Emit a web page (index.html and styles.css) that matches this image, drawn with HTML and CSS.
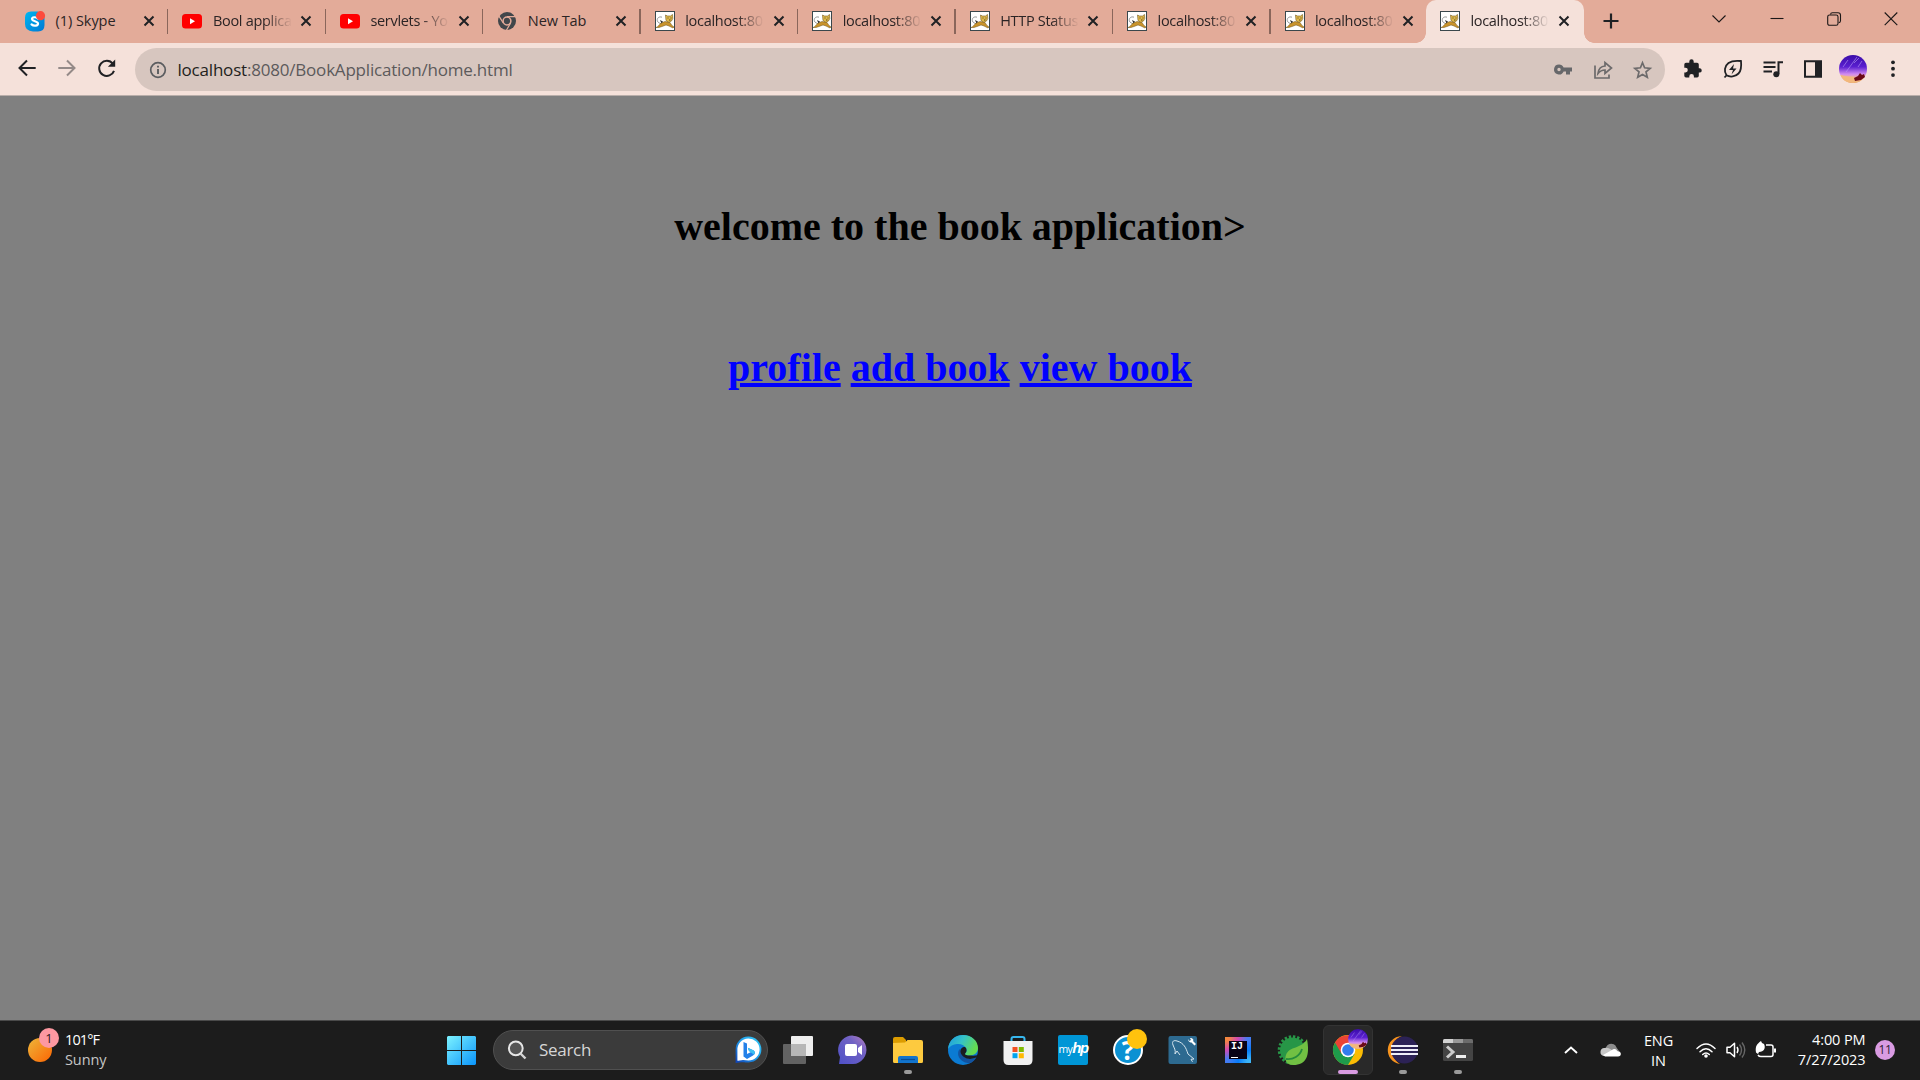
FILE: index.html
```html
<!DOCTYPE html>
<html lang="en">
<head>
<meta charset="utf-8">
<title>localhost:8080/BookApplication/home.html</title>
<link rel="stylesheet" href="styles.css">
</head>
<body>
<svg class="defs" aria-hidden="true">
  <defs>
    <linearGradient id="sky" x1="0" y1="0" x2="1" y2="1"><stop offset="0" stop-color="#00b7f0"/><stop offset="1" stop-color="#0078d4"/></linearGradient>
    <linearGradient id="win" x1="0" y1="0" x2="1" y2="1"><stop offset="0" stop-color="#7df3ff"/><stop offset="1" stop-color="#0a94fb"/></linearGradient>
    <linearGradient id="avatar" x1="0" y1="0" x2="0" y2="1"><stop offset="0" stop-color="#3a0ca8"/><stop offset=".42" stop-color="#5a1fd0"/><stop offset=".68" stop-color="#d08af0"/><stop offset=".82" stop-color="#f0b0a0"/><stop offset="1" stop-color="#d88a50"/></linearGradient>
    <symbol id="x" viewBox="0 0 12 12"><path d="M1.500 1.500l9 9M10.500 1.500l-9 9" fill="none" stroke="#202124" stroke-width="2"/></symbol>
    <symbol id="yt" viewBox="0 0 20 20"><rect y="3" width="20" height="14.500" rx="3.500" fill="#f00"/><path d="M8 7.300v6l5-3z" fill="#fff"/></symbol>
    <symbol id="cat" viewBox="0 0 20 20"><rect x=".5" y=".5" width="19" height="19" fill="#fff" stroke="#3a474c"/><path d="M7 6.200C4 5.200 2 7 2.300 9.500S5 12 6 13" fill="none" stroke="#999" stroke-width="1"/><path d="M1 16.500c2-.5 3-2.500 5-4.500l4-1.500 5 1 2 3 2 1.500-1 1-4-2-3-1-4 1.500-3 1z" fill="#c9932b" stroke="#6e5218" stroke-width=".5"/><path d="M10.500 4l2 1h3l2-1.500.3 4-1.300 2.500-2.500 1.500-3-2z" fill="#dfb84a" stroke="#76581c" stroke-width=".6"/><path d="M12.500 7h1M15.500 7h1M14 9h1.500" stroke="#4b3b1a" stroke-width=".9"/><path d="M5 9l3 1.500-1.500 2z" fill="#333"/></symbol>
    <symbol id="scene" viewBox="0 0 28 28"><circle cx="14" cy="14" r="14" fill="url(#avatar)"/><path d="M4 12l5-7M10 13l8-11M15 8l5-5M19 12l4-6M7 17l3-4" stroke="#b99af5" stroke-width=".6"/><path d="M1.500 20c7 2 11 1 15 2l9-.3A14 14 0 0 1 14 28C8 28 3 25 1.500 20z" fill="#f2b87c"/><path d="M15 23l4-2 2-3 2 2 2-1 1 3-4 3-6 1z" fill="#6a0a18"/></symbol>
  </defs>
</svg>

<header class="tabstrip">
  <div class="tab"><svg class="fav" viewBox="0 0 20 20"><path d="M6 .5h7l6.500 6V14q0 6.500-6.500 6.500H8Q0 20 0 13V6.500Q0 .5 6 .5z" fill="url(#sky)"/><path d="M13 7.500C11 5.500 6.800 6 7 8.200s6 1.800 6 4.200-4 3.200-6.500 1" fill="none" stroke="#fff" stroke-width="2.200" stroke-linecap="round"/><circle cx="15.500" cy="4.700" r="4.600" fill="#fd4a3c"/></svg><span class="title whole">(1) Skype</span><svg class="x"><use href="#x"/></svg></div>
  <div class="tab"><svg class="fav"><use href="#yt"/></svg><span class="title">Bool applica</span><svg class="x"><use href="#x"/></svg></div>
  <div class="tab"><svg class="fav"><use href="#yt"/></svg><span class="title">servlets - Yo</span><svg class="x"><use href="#x"/></svg></div>
  <div class="tab"><svg class="fav" viewBox="0 0 20 20"><circle cx="10" cy="10" r="9" fill="#41464a"/><circle cx="10" cy="10" r="3.900" fill="#41464a" stroke="#e3ab99" stroke-width="1.500"/><path d="M10 5.700h9M6.300 12L1.800 4.800M13.600 12l-4.300 7.500" stroke="#e3ab99" stroke-width="1.300"/></svg><span class="title whole">New Tab</span><svg class="x"><use href="#x"/></svg></div>
  <div class="tab"><svg class="fav"><use href="#cat"/></svg><span class="title">localhost:80</span><svg class="x"><use href="#x"/></svg></div>
  <div class="tab"><svg class="fav"><use href="#cat"/></svg><span class="title">localhost:80</span><svg class="x"><use href="#x"/></svg></div>
  <div class="tab"><svg class="fav"><use href="#cat"/></svg><span class="title">HTTP Status</span><svg class="x"><use href="#x"/></svg></div>
  <div class="tab"><svg class="fav"><use href="#cat"/></svg><span class="title">localhost:80</span><svg class="x"><use href="#x"/></svg></div>
  <div class="tab last"><svg class="fav"><use href="#cat"/></svg><span class="title">localhost:80</span><svg class="x"><use href="#x"/></svg></div>
  <div class="tab active"><svg class="fav"><use href="#cat"/></svg><span class="title">localhost:80</span><svg class="x"><use href="#x"/></svg></div>
  <svg class="plus" viewBox="0 0 16 16"><path d="M8 .5v15M.5 8h15" stroke="#202124" stroke-width="2.200"/></svg>
  <div class="winctl">
    <svg viewBox="0 0 16 16"><path d="M1.500 4.500l6.500 6.500 6.500-6.500" class="thin"/></svg>
    <svg viewBox="0 0 16 16"><path d="M1.500 7.500h13" class="thin"/></svg>
    <svg viewBox="0 0 16 16"><rect x="1.700" y="4" width="10.300" height="10.300" rx="1.800" class="thin"/><path d="M4.500 3.500Q4.700 1.700 6.500 1.700H12q2.500 0 2.500 2.500v5.500q0 1.800-1.800 2" class="thin"/></svg>
    <svg viewBox="0 0 16 16"><path d="M1.700 1.500l12.600 12.600M14.300 1.500L1.700 14.100" class="thin"/></svg>
  </div>
</header>

<nav class="toolbar">
  <div class="navbtns">
    <svg viewBox="0 0 20 20"><path d="M18.700 10H3M10 2.500L2.500 10l7.500 7.500" class="ink"/></svg>
    <svg viewBox="0 0 20 20" class="dim"><path d="M1.300 10H17M10 2.500l7.500 7.500-7.500 7.500" class="ink"/></svg>
    <svg viewBox="0 0 20 20"><path d="M15.800 5.600A7.600 7.600 0 1 0 17 12.800" class="ink"/><path d="M18.200 1.500v7.300h-7.300z" fill="#202124"/></svg>
  </div>
  <div class="omnibox">
    <svg class="info" viewBox="0 0 18 18"><circle cx="9" cy="9" r="7.300" fill="none" stroke="#5b5d60" stroke-width="1.700"/><path d="M9 8v5M9 4.700v1.900" stroke="#5b5d60" stroke-width="1.900"/></svg>
    <span class="url"><b>localhost</b>:8080/BookApplication/home.html</span>
    <svg viewBox="0 0 20 20"><path d="M6 4.500a5 5 0 1 0 4.600 7H13v3h4v-3h2v-4h-8.400A5 5 0 0 0 6 4.500zm0 3.300a1.700 1.700 0 1 1 0 3.400 1.700 1.700 0 0 1 0-3.400z" fill="#66676a"/></svg>
    <svg viewBox="0 0 20 20"><path d="M2 5.500V18h14v-3.500" class="gray"/><path d="M5 13.500c.6-5 3-7.300 7-7.500V2.500L18.500 8 12 13.500V10C9 10 7 11 5 13.500z" class="gray"/></svg>
    <svg viewBox="0 0 20 20"><path d="M9.500 2.700l2.100 5.100 5.600.5-4.200 3.600 1.300 5.400-4.800-2.900-4.800 2.900L6 11.900 1.800 8.300l5.600-.5z" class="gray"/></svg>
  </div>
  <div class="ext">
    <svg viewBox="0 0 20 20"><path d="M17 9.300h-1.200V5.500q0-1.700-1.700-1.700h-3.400V2.500a2.200 2.200 0 0 0-4.400 0v1.300H3Q1.300 3.800 1.300 5.500v3.300h1.200a2.300 2.300 0 0 1 0 4.600H1.300v3.400q0 1.700 1.700 1.700h3.300v-1.200a2.300 2.300 0 0 1 4.600 0v1.200h3.200q1.700 0 1.700-1.700v-3.200H17a2.200 2.200 0 0 0 0-4.300z" fill="#202124"/></svg>
    <svg viewBox="0 0 20 20"><path d="M1.500 18.500l2-2.200C.8 12.500 1.500 7 5.500 4 9 1.500 13.500 1.500 18 2c.5 5 .5 9.500-2.500 12.500-3.200 3.300-8.300 4-12 1.800" class="ink thin2"/><path d="M11 5l-5 6h4l-1.500 4.500 5-6H10z" fill="#202124"/></svg>
    <svg viewBox="0 0 20 20"><path d="M.5 3.500h12M.5 8h12M.5 12.500H9M15.500 15V3.200H20" class="ink"/><circle cx="13.300" cy="15.200" r="3" fill="#202124"/></svg>
    <svg viewBox="0 0 20 20"><path d="M2 2.200h16v15.600H2z" class="ink"/><path d="M12 2h7v16h-7z" fill="#202124"/></svg>
    <svg class="avatar"><use href="#scene"/></svg>
    <svg viewBox="0 0 20 20"><circle cx="10" cy="3.300" r="1.900"/><circle cx="10" cy="9.700" r="1.900"/><circle cx="10" cy="16.100" r="1.900"/></svg>
  </div>
</nav>

<main class="page">
  <h1>welcome to the book application&gt;</h1>
  <h1 class="links"><a href="#">profile</a> <a href="#">add book</a> <a href="#">view book</a></h1>
</main>

<footer class="taskbar">
  <div class="weather">
    <div class="sun"><span class="badge pink">1</span></div>
    <div class="lines"><span class="temp">101°F</span><span class="cond">Sunny</span></div>
  </div>
  <svg class="start" viewBox="0 0 29 29"><path d="M1 0h13v14H0V1zM15 0h13l1 1v13H15zM0 15h14v14H1l-1-1zM15 15h14v13l-1 1H15z" fill="url(#win)"/></svg>
  <div class="search">
    <svg class="mag" viewBox="0 0 20 20"><circle cx="8.800" cy="8.300" r="6.900" fill="#555" stroke="#e6e6e6" stroke-width="2"/><path d="M13.500 13.500l5 5" stroke="#d4d4d4" stroke-width="2.400"/></svg>
    <span>Search</span>
    <svg class="bing" viewBox="0 0 26 26"><defs><linearGradient id="ring" x1="1" y1="0" x2="0" y2="1"><stop offset="0" stop-color="#35c8f5"/><stop offset=".5" stop-color="#1f9bea"/><stop offset="1" stop-color="#1145b8"/></linearGradient></defs><path d="M1.500 25V13A12 12 0 1 1 13.500 24.500c-3 0-4-.2-5.500-.5z" fill="#fff" stroke="url(#ring)" stroke-width="1.800"/><path d="M8.500 5l3.500 1.500V17l4-2-2-1-1.200-3.200 6 2.700c2 2 1 4-.8 5l-6 3.500-3.500-2.500z" fill="#2380e8"/><path d="M14 14l-1.200-3.200 6 2.700c1.500 1.500 1.200 3.200.2 4.300z" fill="#3cc0f0"/></svg>
  </div>
  <div class="apps">
    <div class="app"><svg viewBox="0 0 30 30"><rect x="8" y="1" width="22" height="20" rx="1" fill="#eee"/><rect x="0" y="9" width="23" height="20" rx="1" fill="#626262"/><path d="M8 9h15v12H8z" fill="#b7b7b7"/></svg></div>
    <div class="app"><svg viewBox="0 0 30 30"><defs><linearGradient id="chat" x1="0" y1="1" x2="1" y2="0"><stop offset="0" stop-color="#4e50c8"/><stop offset=".65" stop-color="#7162c4"/><stop offset="1" stop-color="#b980c0"/></linearGradient></defs><path d="M1 29l1-7A14.200 14.200 0 1 1 15 29z" fill="url(#chat)"/><rect x="7" y="9" width="12" height="12" rx="2" fill="#fff"/><path d="M20 13l4-3v10l-4-3z" fill="#fff"/></svg></div>
    <div class="app run"><svg viewBox="0 0 30 30"><path d="M0 4q0-2 2-2h8l3 3v5H0z" fill="#dc9c00"/><path d="M0 8l12-.5 2.500-2.500H28q2 0 2 2v19.500q0 1.500-1.500 1.500h-27Q0 28 0 26.500z" fill="#fdca3f"/><path d="M5 28v-5q0-2 2-2h16q2 0 2 2v5z" fill="#1274cc"/><path d="M8 24.500h14" stroke="#084c93" stroke-width="1.200"/></svg></div>
    <div class="app"><svg viewBox="0 0 30 30"><defs><linearGradient id="edge" x1="0" y1="0" x2="1" y2=".4"><stop offset="0" stop-color="#1c9ae0"/><stop offset=".5" stop-color="#35c2c7"/><stop offset="1" stop-color="#65dc50"/></linearGradient></defs><circle cx="15" cy="15" r="15" fill="#0b7bd3"/><path d="M0 14C1 5 7 0 15 0c9 0 15 6 15 13 0 5-4 7.500-9 7.500-3 0-5-1-3.500-2.500C21 14 16 8 9 9c-4 .5-7 2-9 5z" fill="url(#edge)"/><path d="M11.500 14c-4 6 1 14 10.500 14.300 3-1.500 5-3.500 6.500-6-5 3-12.500 2-15-4z" fill="#1253a0"/><path d="M17.500 18c1.500-1.500 1.500-4.500-.5-6-3 0-5 2-4.500 5 1 5 7 8 12.500 6.500 2-.5 3.300-1 4-2l.4-1.200c-2.400.5-5.400.4-8.400.2-3 0-5-1-3.500-2.500z" fill="#1b1c20"/></svg></div>
    <div class="app"><svg viewBox="0 0 30 30"><path d="M8.500 7V4q0-2 2-2h9q2 0 2 2v3" fill="none" stroke="#37b7ee" stroke-width="2"/><path d="M.5 6h29v19q0 5-5 5h-19q-5 0-5-5z" fill="#f1f1f1"/><path fill="#f25022" d="M9.500 12h5v5h-5z"/><path fill="#7fba00" d="M15.800 12h5v5h-5z"/><path fill="#00a4ef" d="M9.500 18.200h5v5h-5z"/><path fill="#ffb900" d="M15.800 18.200h5v5h-5z"/></svg></div>
    <div class="app"><span class="myhp">my<b>hp</b></span></div>
    <div class="app"><span class="help">?</span><i class="badge yellow"></i></div>
    <div class="app"><svg viewBox="0 0 30 30"><rect x=".5" y="1" width="28.500" height="28" rx="2" fill="#2d6a90"/><path d="M7 19c1-4-1-6-2-9-1.500-4 1-5 4-4 7 2 9 7 11 13l6 5-3 .3 1.500 2.500M7 19l2-3 3 4" fill="none" stroke="#d5e5ee" stroke-width="1"/><path d="M20 4l1 2 2-1-1-2c3 0 4 2 3 3l3 3-1.500 1.500-3-3c-2 0-4-2-3.500-3.500z" fill="#fff"/></svg></div>
    <div class="app"><span class="ij">IJ</span></div>
    <div class="app"><svg viewBox="0 0 30 30"><circle cx="14.500" cy="15" r="12.500" fill="#279647"/><circle cx="14.500" cy="15" r="13.300" fill="none" stroke="#279647" stroke-width="3" stroke-dasharray="2.400 1.780"/><path d="M29 4c3 16 0 26-14 26-6 0-9-5-7-10C11 11 24 14 29 4z" fill="#71c043"/><path d="M8 24c7 1 14-3 16-10" fill="none" stroke="#258b3c" stroke-width="1.800"/></svg></div>
    <div class="app run current"><svg viewBox="0 0 30 30"><circle cx="15" cy="15" r="15" fill="#fbbc04"/><path d="M2 7.500A15 15 0 0 0 15 30l6.500-11L15 15z" fill="#1e9b4b"/><path d="M2 7.500L8.700 19 15 15V8H28A15 15 0 0 0 2 7.500z" fill="#ea4335"/><circle cx="15" cy="15" r="7.300" fill="#fff"/><circle cx="15" cy="15" r="5.800" fill="#327ded"/></svg><svg class="badge person"><use href="#scene"/></svg></div>
    <div class="app run"><svg viewBox="0 0 30 30"><path d="M14 1C-4 2-5 26 12 29 1 22 2 6 14 1z" fill="#f7941e"/><circle cx="16.500" cy="15" r="13.500" fill="#2c2255"/><path d="M3 11h27M3 15h27M3 19h27" stroke="#eeeef7" stroke-width="2"/></svg></div>
    <div class="app run"><svg viewBox="0 0 30 30"><rect y="4" width="30" height="22" rx="1.500" fill="#444"/><path d="M0 8V5.500Q0 4 1.500 4H10v4z" fill="#d2d2d2"/><path d="M10 4h10v4H10z" fill="#999"/><path d="M20 4h8.500Q30 4 30 5.500V8H20z" fill="#6c6c6c"/><path d="M4 11.500l6 5.500-6 5.500" fill="none" stroke="#ccc" stroke-width="3"/><path d="M13 21.500h10" stroke="#eee" stroke-width="3"/></svg></div>
  </div>
  <div class="tray">
    <svg class="up" viewBox="0 0 14 8"><path d="M1 7l6-5.500L13 7" fill="none" stroke="#fff" stroke-width="1.900"/></svg>
    <svg class="cloud" viewBox="0 0 20 14"><path d="M5 8a5.500 5.500 0 0 1 10.500-3.500L18 8z" fill="#8c8c8c"/><path d="M3 13a4 4 0 0 1 1-8c4-1 6 2 10 4v4z" fill="#c8c8c8"/><path d="M2 12l9-5c2-2 5-.5 5 1 5 0 5 5.500 1 5.500H4z" fill="#fff"/></svg>
    <div class="lang"><span>ENG</span><span>IN</span></div>
    <svg class="wifi" viewBox="0 0 20 16"><path d="M1 6.500q9-9 18 0M4 9.700q6-6 12 0M6.700 12.500q3.300-3 6.600 0" fill="none" stroke="#fff" stroke-width="1.500" stroke-linecap="round"/><circle cx="10" cy="14" r="1.800" fill="#fff"/></svg>
    <svg class="snd" viewBox="0 0 20 18"><path d="M1 6.200h3l4.500-4v13.600l-4.500-4H1z" fill="none" stroke="#fff" stroke-width="1.500" stroke-linejoin="round"/><path d="M11 6q2 3 0 6" fill="none" stroke="#fff" stroke-width="1.400"/><path d="M13.500 3.500q4 5.500 0 11M16 1.500q5.500 7.500 0 15" fill="none" stroke="#666" stroke-width="1.400"/></svg>
    <svg class="bat" viewBox="0 0 20 18"><path d="M10 5h5q2 0 2 2v7.500q0 2-2 2H5q-2 0-3-1.500" fill="none" stroke="#fff" stroke-width="1.500"/><path d="M18 8.500h2v4h-2z" fill="#fff"/><path d="M0 12.500C-1 6 1 4 5 1l1 2 2 1c2 4 0 8-5 8l-1 2z" fill="#fff"/></svg>
    <div class="clock"><span>4:00 PM</span><span class="date">7/27/2023</span></div>
    <span class="count">11</span>
  </div>
</footer>
</body>
</html>
```

FILE: styles.css
```css
* { box-sizing: border-box; }
body {
  margin: 0;
  width: 1920px;
  height: 1080px;
  display: flex;
  flex-direction: column;
  overflow: hidden;
  font-family: "Open Sans", "Noto Sans", sans-serif;
}
svg { display: block; flex: none; overflow: visible; }
.defs { position: absolute; width: 0; height: 0; }

/* tab strip */
.tabstrip { height: 43px; flex: none; display: flex; padding-left: 11px; background: #e3ab99; }
.tab { position: relative; width: 157.450px; display: flex; align-items: center; padding: 0 0 1px 14px; flex: none; }
.tab::after { content: ""; position: absolute; right: 0; top: 9px; width: 1.300px; height: 25px; background: #8a665b; }
.tab.last { width: 155.400px; }
.tab.last::after { display: none; }
.fav { width: 20px; height: 20px; margin-right: 10.500px; }
.title {
  width: 79px; height: 22px; line-height: 21px; font-size: 14.500px; letter-spacing: -.3px;
  white-space: nowrap; color: #2b2425; margin-right: 8.300px;
  -webkit-mask-image: linear-gradient(90deg, #000 65%, transparent 100%);
  mask-image: linear-gradient(90deg, #000 65%, transparent 100%);
}
.title.whole { letter-spacing: -.05px; -webkit-mask-image: none; mask-image: none; }
.x { width: 12px; height: 12px; }
.tab.active { background: #f5e1da; border-radius: 10px 10px 0 0; width: 158px; }
.tab.active::before, .tab.active::after {
  content: ""; position: absolute; top: auto; bottom: 0; width: 10px; height: 10px;
}
.tab.active::before { left: -10px; background: radial-gradient(circle at 0 0, transparent 9.500px, #f5e1da 10px); }
.tab.active::after { right: -10px; background: radial-gradient(circle at 100% 0, transparent 9.500px, #f5e1da 10px); }
.plus { width: 16px; height: 16px; margin: 13px 0 0 19px; }
.winctl { display: flex; gap: 41.200px; margin: 11px 21px 0 auto; }
.winctl svg { width: 16px; height: 16px; }
.thin { fill: none; stroke: #1b1717; stroke-width: 1.100; }

/* toolbar */
.toolbar { height: 53px; flex: none; display: flex; padding: 5px 0; background: #f5e1da; border-bottom: 1px solid #b9aeaa; }
.navbtns { width: 135px; display: flex; align-items: center; gap: 20px; padding: 0 0 2px 17px; }
.navbtns svg { width: 20px; height: 20px; }
.ink { fill: none; stroke: #202124; stroke-width: 2; }
.thin2 { stroke-width: 1.800; }
.dim { opacity: .45; }
.omnibox { width: 1530px; height: 43px; display: flex; align-items: center; gap: 20px; padding: 0 12.500px 0 13.500px; border-radius: 22px; background: #d7c6bf; }
.omnibox svg { width: 20px; height: 20px; }
.omnibox .info { width: 18px; height: 18px; }
.url { flex: 1; margin-left: -9px; font-size: 17px; letter-spacing: -.2px; line-height: 24px; color: #5c5a5b; }
.url b { font-weight: 400; color: #231f20; }
.gray { fill: none; stroke: #6c6a6b; stroke-width: 1.700; }
.ext { flex: 1; display: grid; grid-template-columns: repeat(6, 40px); justify-items: center; align-items: center; padding-left: 7.500px; }
.ext svg { width: 20px; height: 20px; fill: #202124; }
.ext .avatar { width: 28px; height: 28px; }

/* web page */
.page { flex: 1; padding-top: 108px; background: #808080; text-align: center; }
.page h1 { margin: 0; font: bold 40px/46px "Liberation Serif", "Times New Roman", serif; color: #000; }
.page .links { margin-top: 95px; }
.page a { color: #00f; text-decoration: underline; }

/* taskbar */
.taskbar { height: 60px; flex: none; display: flex; align-items: center; padding-bottom: 1px; background: #1c1c1c; border-top: 1px solid #4a4a4a; color: #fff; font-size: 14.500px; line-height: 20px; }
.weather { width: 447px; display: flex; padding-left: 28px; }
.sun { position: relative; width: 24px; height: 24px; margin: 7px 13px 0 0; border-radius: 50%; background: linear-gradient(135deg, #eeb63a, #fb6503); }
.badge { position: absolute; width: 20px; height: 20px; border-radius: 50%; }
.pink { left: 11px; top: -10px; background: #fd98a1; color: #33191c; text-align: center; font-size: 13px; }
.yellow { right: 6px; top: 4px; background: #ffc20d; }
.person { right: 4px; top: 3px; }
.lines, .lang, .clock { display: flex; flex-direction: column; }
.lines { margin-top: -1px; }
.temp { letter-spacing: -.9px; }
.cond { color: #c6c6c6; letter-spacing: -.1px; }
.start { width: 29px; height: 29px; margin-right: 17px; }
.search { width: 275px; height: 40px; display: flex; align-items: center; padding: 0 6px 0 13px; border: 1px solid #505050; border-radius: 20px; background: #3b3b3b; color: #d6d6d6; font-size: 17px; }
.search span { flex: 1; margin-left: 12px; letter-spacing: -.3px; }
.mag { width: 20px; height: 20px; }
.bing { width: 26px; height: 26px; }
.apps { display: grid; grid-template-columns: repeat(13, 55px); margin-left: 2.500px; }
.app { position: relative; height: 50px; margin: 0 2.500px; display: flex; align-items: center; justify-content: center; }
.app > svg:first-child { width: 30px; height: 30px; }
.run::after { content: ""; position: absolute; left: 21px; bottom: 1px; width: 8px; height: 4px; border-radius: 2px; background: #9a9a9a; }
.current { background: #292929; border: 1px solid #333; border-radius: 6px; }
.current::after { left: 14px; bottom: 0; width: 20px; background: #d99be2; }
.current .person { width: 20px; height: 20px; }
.myhp { width: 30px; height: 30px; border-radius: 2px; background: #0096d6; text-align: center; font: 10.500px/29px "Open Sans", sans-serif; letter-spacing: -.6px; white-space: nowrap; }
.myhp b { font: italic bold 15px/20px "Liberation Sans Narrow", "Liberation Sans", sans-serif; letter-spacing: -1.500px; }
.help { width: 30px; height: 30px; border: 2px solid #fff; border-radius: 50%; background: #0b91d3; text-align: center; font: bold 26px/27px "Open Sans", sans-serif; }
.ij { position: relative; width: 26px; height: 26px; border: 4px solid; border-image: linear-gradient(135deg, #f68b38, #d249b3 25%, #437cf2 50%, #087cfa 75%, #3fb7f7) 1; background: #090317; font: bold 10px/11px "Liberation Mono", monospace; padding-left: 2px; }
.ij::after { content: ""; position: absolute; left: 2px; bottom: 1px; width: 7px; height: 1.500px; background: #fff; }

.tray { flex: 1; display: flex; align-items: center; padding-left: 78px; }
.up { width: 14px; height: 8px; }
.cloud { width: 20px; height: 14px; margin-left: 23px; }
.lang { width: 40px; margin: 1px 0 0 18px; text-align: center; letter-spacing: -.1px; }
.wifi { width: 20px; height: 16px; margin-left: 17px; }
.snd { width: 20px; height: 18px; margin-left: 10px; }
.bat { width: 20px; height: 18px; margin: -3px 0 0 10px; }
.clock { width: 90px; margin-top: -1px; text-align: right; letter-spacing: -.1px; }
.count { width: 20px; height: 20px; margin-left: 9.500px; border-radius: 50%; background: #d99be2; color: #2d1c30; text-align: center; font-size: 12px; line-height: 20px; letter-spacing: -.3px; }
```
